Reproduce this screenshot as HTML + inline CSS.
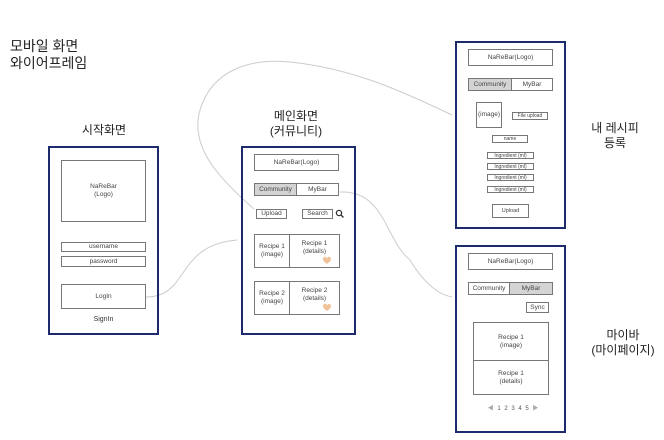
<!DOCTYPE html>
<html><head><meta charset="utf-8"><style>
body{margin:0;width:664px;height:440px;background:#fff;position:relative;overflow:hidden;font-family:"Liberation Sans","Noto Sans CJK KR",sans-serif;color:#333}
.a{position:absolute;box-sizing:border-box}
.f{border:2.5px solid #1d2a6b}
.b{border:1px solid #777;display:flex;align-items:center;justify-content:center;text-align:center;font-size:6.5px;line-height:8px;color:#444}
.g{background:#d4d4d4}
.l{font-size:12px;text-align:center;line-height:15px;color:#222}
</style></head><body>
<svg class="a" style="left:0;top:0" width="664" height="440"><g fill="none" stroke="#ccc" stroke-width="1">
<path d="M146 297 C190 297 175 245 237 240"/>
<path d="M254 209 C215 175 190 145 200 110 C212 70 250 58 290 62 C350 68 400 90 452 115"/>
<path d="M340 192 C385 190 385 240 410 260 C425 285 440 295 452 297"/>
</g>
<g fill="none" stroke="#333" stroke-width="1.3"><circle cx="339" cy="213" r="2.6"/><path d="M341 215 L343.5 217.5"/></g>
<path d="M323 259 c0-3 4-3 4 0 c0-3 4-3 4 0 c0 2-2 3.5-4 5 c-2-1.5-4-3-4-5z" fill="#f0c29a"/>
<path d="M323 306 c0-3 4-3 4 0 c0-3 4-3 4 0 c0 2-2 3.5-4 5 c-2-1.5-4-3-4-5z" fill="#f0c29a"/>
</svg>
<div class="a" style="left:10px;top:38px;font-size:14px;line-height:17px;color:#222">모바일 화면<br>와이어프레임</div>
<div class="a l" style="left:64px;top:123px;width:80px">시작화면</div>
<div class="a l" style="left:256px;top:109px;width:80px">메인화면<br>(커뮤니티)</div>
<div class="a l" style="left:580px;top:121px;width:70px">내 레시피<br>등록</div>
<div class="a l" style="left:582px;top:328px;width:82px">마이바<br>(마이페이지)</div>

<div class="a f" style="left:48px;top:146px;width:111px;height:189px"></div>
<div class="a b" style="left:61px;top:160px;width:85px;height:62px">NaReBar<br>(Logo)</div>
<div class="a b" style="left:61px;top:242px;width:85px;height:10px">username</div>
<div class="a b" style="left:61px;top:256px;width:85px;height:11px">password</div>
<div class="a b" style="left:61px;top:284px;width:85px;height:25px">LogIn</div>
<div class="a" style="left:61px;top:316px;width:85px;text-align:center;font-size:7px">SignIn</div>

<div class="a f" style="left:241px;top:146px;width:115px;height:189px"></div>
<div class="a b" style="left:254px;top:154px;width:85px;height:17px">NaReBar(Logo)</div>
<div class="a b g" style="left:254px;top:183px;width:43px;height:13px">Community</div>
<div class="a b" style="left:296px;top:183px;width:43px;height:13px">MyBar</div>
<div class="a b" style="left:256px;top:209px;width:31px;height:10px">Upload</div>
<div class="a b" style="left:302px;top:209px;width:31px;height:10px">Search</div>
<div class="a b" style="left:254px;top:234px;width:36px;height:34px">Recipe 1<br>(image)</div>
<div class="a b" style="left:289px;top:234px;width:51px;height:34px;align-items:flex-start;padding-top:5px">Recipe 1<br>(details)</div>
<div class="a b" style="left:254px;top:281px;width:36px;height:34px">Recipe 2<br>(image)</div>
<div class="a b" style="left:289px;top:281px;width:51px;height:34px;align-items:flex-start;padding-top:5px">Recipe 2<br>(details)</div>

<div class="a f" style="left:455px;top:41px;width:111px;height:188px"></div>
<div class="a b" style="left:468px;top:49px;width:85px;height:17px">NaReBar(Logo)</div>
<div class="a b g" style="left:468px;top:78px;width:44px;height:13px">Community</div>
<div class="a b" style="left:511px;top:78px;width:42px;height:13px">MyBar</div>
<div class="a b" style="left:476px;top:102px;width:26px;height:26px">(image)</div>
<div class="a b" style="left:512px;top:112px;width:36px;height:8px;font-size:5px">File upload</div>
<div class="a b" style="left:492px;top:135px;width:36px;height:8px;font-size:5px">name</div>
<div class="a b" style="left:487px;top:152px;width:47px;height:7px;font-size:5px">Ingredient (ml)</div>
<div class="a b" style="left:487px;top:163px;width:47px;height:7px;font-size:5px">Ingredient (ml)</div>
<div class="a b" style="left:487px;top:174px;width:47px;height:7px;font-size:5px">Ingredient (ml)</div>
<div class="a b" style="left:487px;top:186px;width:47px;height:7px;font-size:5px">Ingredient (ml)</div>
<div class="a b" style="left:492px;top:204px;width:37px;height:14px;font-size:5.5px">Upload</div>

<div class="a f" style="left:455px;top:245px;width:111px;height:188px"></div>
<div class="a b" style="left:468px;top:253px;width:85px;height:17px">NaReBar(Logo)</div>
<div class="a b" style="left:468px;top:282px;width:42px;height:13px">Community</div>
<div class="a b g" style="left:509px;top:282px;width:44px;height:13px">MyBar</div>
<div class="a b" style="left:526px;top:302px;width:23px;height:11px">Sync</div>
<div class="a b" style="left:473px;top:322px;width:76px;height:39px">Recipe 1<br>(image)</div>
<div class="a b" style="left:473px;top:360px;width:76px;height:35px">Recipe 1<br>(details)</div>
<div class="a" style="left:478px;top:403px;width:70px;text-align:center;font-size:6px;color:#555;word-spacing:2px"><span style="color:#aaa">◀</span> 1 2 3 4 5 <span style="color:#aaa">▶</span></div>
</body></html>
